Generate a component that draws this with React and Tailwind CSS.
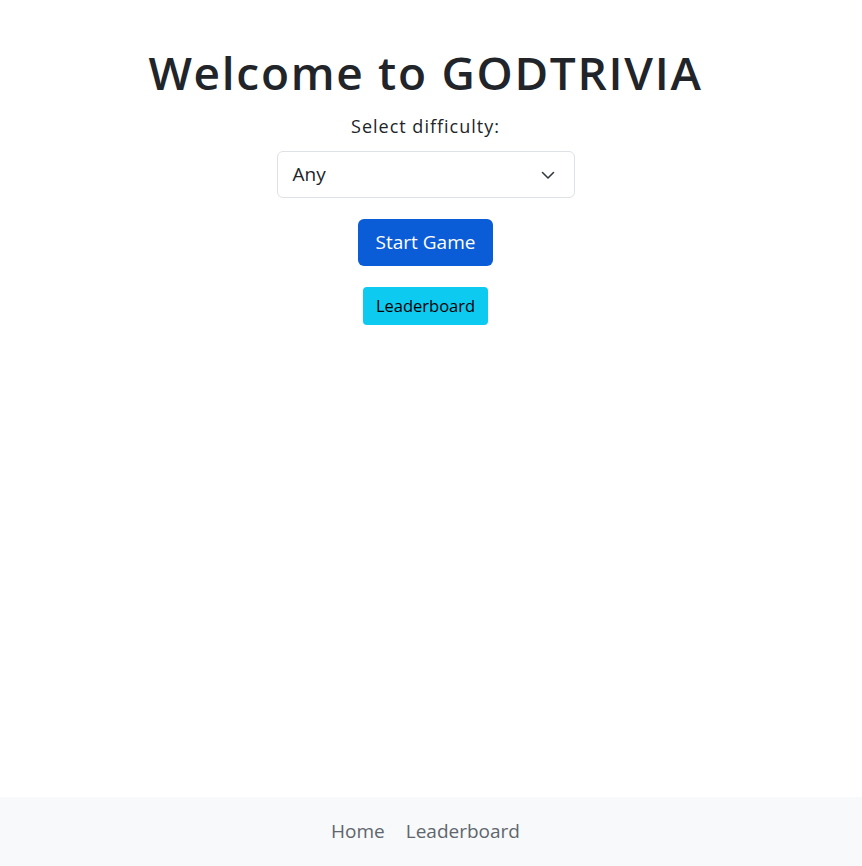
export default function App() {
  return (
    <div className="min-h-screen flex flex-col bg-white text-[#212529]" style={{ fontFamily: '"Open Sans", "Noto Sans", sans-serif' }}>
      <main className="flex-1 flex flex-col items-center pt-[45px] pr-[11px]">
        <h1 className="text-[46px] leading-[1.2] font-semibold tracking-[1.7px]">Welcome to GODTRIVIA</h1>
        <label className="mt-[13px] text-[18px] leading-[1.5] tracking-[1px]">Select difficulty:</label>
        <div className="mt-[11px] relative w-[298px] h-[47px] border border-[#dee2e6] rounded-[6px] flex items-center px-[15px]">
          <span className="text-[19px]">Any</span>
          <svg className="absolute right-[19px] top-[18px]" width="14" height="10" viewBox="0 0 14 10" fill="none">
            <path d="M1.5 2.5 L7 8 L12.5 2.5" stroke="#343a40" strokeWidth="1.6" strokeLinecap="round" strokeLinejoin="round" />
          </svg>
        </div>
        <button className="mt-[21px] w-[135px] h-[47px] rounded-[6px] bg-[#0b5cd7] text-white text-[19px]">Start Game</button>
        <button className="mt-[21px] w-[125px] h-[38px] rounded-[4px] bg-[#0dcaf0] text-black text-[16.5px]">Leaderboard</button>
      </main>
      <footer className="h-[69px] bg-[#f8f9fa] flex items-center justify-center gap-[21px] pr-[11px] text-[19px] text-[#5f666d]">
        <span>Home</span>
        <span>Leaderboard</span>
      </footer>
    </div>
  );
}
